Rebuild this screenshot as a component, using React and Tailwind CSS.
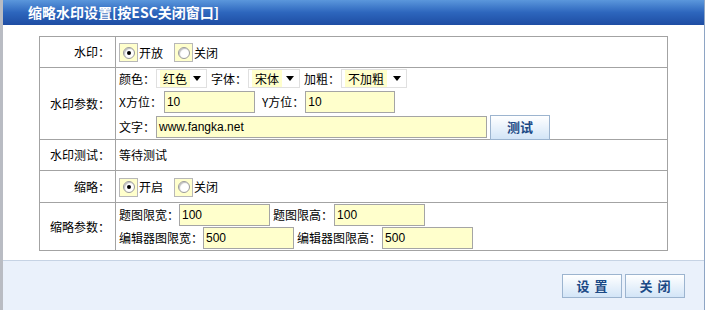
import React from "react";

const font = { fontFamily: '"Noto Sans CJK SC", "Liberation Sans", sans-serif' };

function Radio({ checked, label }) {
  return (
    <span className="flex items-center">
      <span className="w-[19px] h-[19px] bg-[#ffffcc] border border-[#b8b8b8] flex items-center justify-center">
        <span className="w-[12px] h-[12px] rounded-full bg-white border border-[#9a9a9a] flex items-center justify-center shadow-[inset_1px_1px_1px_#c0c0c0]">
          {checked && <span className="w-[4px] h-[4px] rounded-full bg-black" />}
        </span>
      </span>
      <span className="ml-[1px]">{label}</span>
    </span>
  );
}

function Select({ text, w }) {
  return (
    <span className={`${w} h-[19px] border border-[#e0e0e0] bg-white flex items-center justify-between pl-[3px] pr-[5px]`}>
      <span className="bg-[#ffffcc] px-[3px] leading-[17px]">{text}</span>
      <svg width="8" height="5" viewBox="0 0 8 5"><path d="M0 0h8L4 5z" fill="#000" /></svg>
    </span>
  );
}

function Input({ value, w }) {
  return (
    <span className={`${w} h-[22px] bg-[#ffffcc] border border-[#a5a5a5] flex items-center pl-[2px] text-[12px] font-['Liberation_Sans',sans-serif]`}>
      {value}
    </span>
  );
}

function BlueBtn({ children, w, cls = "" }) {
  return (
    <button className={`${w} h-[24px] border border-[#9cb4cf] bg-gradient-to-b from-white to-[#d3e5f7] text-[#1b4a86] font-bold text-[13px] flex items-center justify-center ${cls}`}>
      {children}
    </button>
  );
}

export default function App() {
  const lab = "border border-[#a3a3a3] text-right pr-[5px] align-middle";
  const cell = "border border-[#a3a3a3] pl-[3px] align-middle";
  return (
    <div className="w-[705px] h-[310px] flex bg-[#c8c8c8] text-[12px] text-black overflow-hidden" style={font}>
      <div className="w-[3px] bg-[#b9bcc3]" />
      <div className="flex-1 flex flex-col border-r border-[#8ea5c4]">
        <div className="h-[25px] bg-gradient-to-b from-[#5b97dc] via-[#2d66bd] to-[#1e4da3] flex items-center pl-[25px]">
          <span className="text-white font-bold text-[14px]" style={{ fontFamily: '"Noto Sans CJK SC", serif' }}>
            缩略水印设置[按ESC关闭窗口]
          </span>
        </div>
        <div className="h-[236px] bg-white pl-[36px] pt-[11px] border-b border-[#c6d3e4]">
          <table className="border-collapse w-[629px]">
            <tbody>
              <tr className="h-[31px]">
                <td className={`${lab} w-[76px]`}>水印：</td>
                <td className={cell}>
                  <div className="flex items-center gap-[11px] pt-[1px]">
                    <Radio checked label="开放" />
                    <Radio label="关闭" />
                  </div>
                </td>
              </tr>
              <tr className="h-[71px]">
                <td className={lab}>水印参数：</td>
                <td className={cell}>
                  <div className="flex flex-col gap-[2px]">
                    <div className="flex items-center h-[21px]">
                      <span>颜色：</span>
                      <Select text="红色" w="w-[51px] ml-[1px]" />
                      <span className="ml-[4px]">字体：</span>
                      <Select text="宋体" w="w-[52px] ml-[1px]" />
                      <span className="ml-[4px]">加粗：</span>
                      <Select text="不加粗" w="w-[66px] ml-[1px]" />
                    </div>
                    <div className="flex items-center h-[22px]">
                      <span>X方位：</span>
                      <Input value="10" w="w-[91px] ml-[2px]" />
                      <span className="ml-[7px]">Y方位：</span>
                      <Input value="10" w="w-[90px] ml-[1px]" />
                    </div>
                    <div className="flex items-center h-[24px]">
                      <span>文字：</span>
                      <Input value="www.fangka.net" w="w-[331px] ml-[1px] h-[21px]" />
                      <span className="ml-[3px]"><BlueBtn w="w-[60px] h-[25px]">测试</BlueBtn></span>
                    </div>
                  </div>
                </td>
              </tr>
              <tr className="h-[31px]">
                <td className={lab}>水印测试：</td>
                <td className={cell}>等待测试</td>
              </tr>
              <tr className="h-[32px]">
                <td className={lab}>缩略：</td>
                <td className={cell}>
                  <div className="flex items-center gap-[11px] pt-[1px]">
                    <Radio checked label="开启" />
                    <Radio label="关闭" />
                  </div>
                </td>
              </tr>
              <tr className="h-[48px]">
                <td className={lab}>缩略参数：</td>
                <td className={cell}>
                  <div className="flex flex-col gap-[2px]">
                    <div className="flex items-center h-[21px]">
                      <span>题图限宽：</span>
                      <Input value="100" w="w-[91px] ml-[0px]" />
                      <span className="ml-[3px]">题图限高：</span>
                      <Input value="100" w="w-[91px] ml-[1px]" />
                    </div>
                    <div className="flex items-center h-[22px]">
                      <span>编辑器图限宽：</span>
                      <Input value="500" w="w-[91px] ml-[0px]" />
                      <span className="ml-[3px]">编辑器图限高：</span>
                      <Input value="500" w="w-[91px] ml-[1px]" />
                    </div>
                  </div>
                </td>
              </tr>
            </tbody>
          </table>
        </div>
        <div className="flex-1 bg-[#eaf1fb] flex justify-end items-start pt-[13px] pr-[19px] gap-[3px]">
          <BlueBtn w="w-[60px]" cls="tracking-[5px] pl-[5px]">设置</BlueBtn>
          <BlueBtn w="w-[60px]" cls="tracking-[5px] pl-[5px]">关闭</BlueBtn>
        </div>
      </div>
    </div>
  );
}
